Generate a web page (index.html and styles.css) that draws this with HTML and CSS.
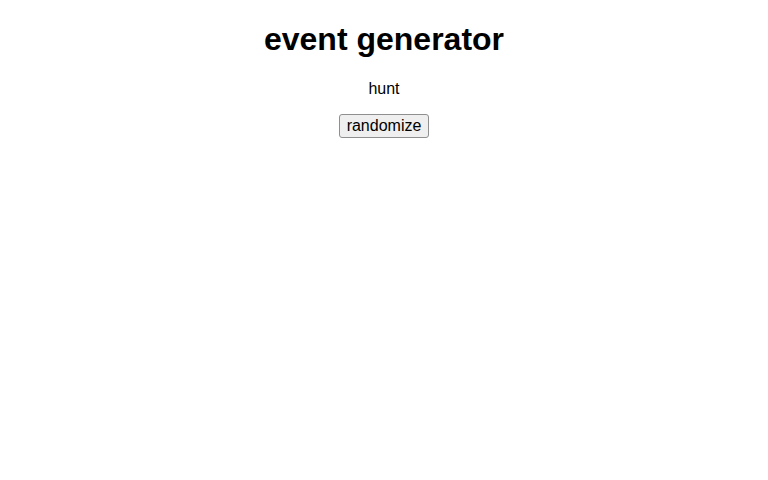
FILE: index.html
```html
<!DOCTYPE html>
<html>
<head>
  <meta charset="UTF-8">
  <title>event generator</title>
  <link rel="stylesheet" href="styles.css">
</head>
<body>
  <div class="app">
    <h1>event generator</h1>
    <p id="event">hunt</p>
    <p>
      <button id="randomize">randomize</button>
    </p>
  </div>
</body>
</html>
```

FILE: styles.css
```css
body {
  margin: 0;
  padding: 0 8px;
  font-family: "Liberation Sans", Arial, sans-serif;
  color: #000;
  background: #fff;
}

.app {
  text-align: center;
}

h1 {
  font-size: 32px;
  margin: 21.44px 0;
}

p {
  font-size: 16px;
  margin: 16px 0;
}

button {
  font-family: "Liberation Sans", Arial, sans-serif;
  font-size: 16px;
  color: #000;
  background: #efefef;
  border: 1px solid #8f8f8f;
  border-radius: 3px;
  padding: 2px 7px;
}
```
